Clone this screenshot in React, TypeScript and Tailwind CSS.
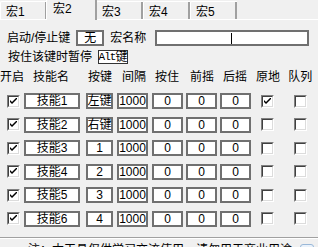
import React from "react";

const skills = [
  { name: "技能1", key: "左键", on: true, stay: true },
  { name: "技能2", key: "右键", on: true, stay: false },
  { name: "技能3", key: "1", on: true, stay: false },
  { name: "技能4", key: "2", on: true, stay: false },
  { name: "技能5", key: "3", on: true, stay: false },
  { name: "技能6", key: "4", on: true, stay: false },
];

function Check({ checked, className = "" }: { checked: boolean; className?: string }) {
  return (
    <div
      className={
        "w-[13px] h-[13px] shrink-0 bg-white border border-t-[#808080] border-l-[#808080] border-r-white border-b-white flex " +
        className
      }
    >
      <div className="flex-1 border border-t-[#404040] border-l-[#404040] border-r-[#dcdcdc] border-b-[#dcdcdc] flex items-center justify-center">
        {checked && (
          <svg width="7" height="7" viewBox="0 0 7 7">
            <path d="M0 2 L0 4 L2 6 L7 1 L7 -1 L2 4 Z" fill="#000" />
          </svg>
        )}
      </div>
    </div>
  );
}

function Box({ w, ml, children }: { w: string; ml: string; children: React.ReactNode }) {
  return (
    <div
      className={`${w} ${ml} h-[16px] shrink-0 bg-white border-2 border-[#707070] flex items-center justify-center text-[12px] leading-[12px] text-black whitespace-nowrap`}
    >
      {children}
    </div>
  );
}

function Tab({ label, active }: { label: string; active?: boolean }) {
  if (active) {
    return (
      <div className="relative z-10 -mb-px w-[51px] h-[21px] -ml-[1px] -mr-[1px] bg-[#f0f0f0] border-l border-t border-white rounded-tl-[2px] flex">
        <div className="flex-1 border-r-2 border-[#a0a0a0] pl-[6px] pt-[1px] text-[12px] leading-[16px]">{label}</div>
      </div>
    );
  }
  return (
    <div className="w-[47px] h-[18px] bg-[#f0f0f0] border-l border-t border-white rounded-tl-[2px] flex">
      <div className="flex-1 border-r-2 border-[#a0a0a0] pl-[5px] pt-[2px] text-[12px] leading-[16px]">{label}</div>
    </div>
  );
}

export default function App() {
  return (
    <div
      className="w-[318px] h-[247px] overflow-hidden bg-[#f0f0f0] text-black text-[12px]"
      style={{ fontFamily: '"Liberation Sans", "Noto Sans CJK SC", sans-serif' }}
    >
      <div className="flex items-end h-[20px] border-b border-white">
        <Tab label="宏1" />
        <Tab label="宏2" active />
        <Tab label="宏3" />
        <Tab label="宏4" />
        <Tab label="宏5" />
      </div>

      <div className="flex items-center mt-[9px] h-[17px]">
        <span className="ml-[7px] leading-[12px] whitespace-nowrap">启动/停止键</span>
        <div className="ml-[6px] w-[28px] h-[16px] bg-white border-2 border-[#707070] flex items-center justify-center leading-[12px]">
          无
        </div>
        <span className="ml-[6px] leading-[12px] whitespace-nowrap">宏名称</span>
        <div className="ml-[9px] w-[154px] h-[16px] mt-[1px] bg-white border-2 border-[#707070] flex items-center">
          <div className="ml-[74px] w-px h-[11px] bg-black" />
        </div>
      </div>

      <div className="flex items-center mt-[4px] h-[14px]">
        <span className="ml-[8px] leading-[12px] whitespace-nowrap">按住该键时暂停</span>
        <div className="ml-[6px] w-[30px] h-[14px] bg-white border border-[#333] flex items-center justify-center leading-[12px] whitespace-nowrap">
          <span style={{ fontFamily: '"Liberation Mono", monospace' }} className="text-[11px] tracking-[-1px]">Alt</span>键
        </div>
      </div>

      <div className="flex mt-[7px] h-[12px] leading-[12px] whitespace-nowrap">
        <span className="shrink-0">开启</span>
        <span className="shrink-0 ml-[9px]">技能名</span>
        <span className="shrink-0 ml-[19px]">按键</span>
        <span className="shrink-0 ml-[10px]">间隔</span>
        <span className="shrink-0 ml-[9px]">按住</span>
        <span className="shrink-0 ml-[11px]">前摇</span>
        <span className="shrink-0 ml-[9px]">后摇</span>
        <span className="shrink-0 ml-[9px]">原地</span>
        <span className="shrink-0 ml-[8px]">队列</span>
      </div>

      <div className="flex flex-col gap-[7.6px] mt-[10px]">
        {skills.map((s) => (
          <div key={s.name} className="flex items-center h-[16px]">
            <Check checked={s.on} className="ml-[7px]" />
            <Box w="w-[56px]" ml="ml-[4px]">{s.name}</Box>
            <Box w="w-[27px]" ml="ml-[6px]">{s.key}</Box>
            <Box w="w-[31px]" ml="ml-[4px]">1000</Box>
            <Box w="w-[31px]" ml="ml-[4px]">0</Box>
            <Box w="w-[31px]" ml="ml-[3px]">0</Box>
            <Box w="w-[31px]" ml="ml-[3px]">0</Box>
            <Check checked={s.stay} className="ml-[10px]" />
            <Check checked={false} className="ml-[20px]" />
          </div>
        ))}
      </div>

      <div className="mt-[10px] border-t border-[#a0a0a0] border-b border-b-white" />

      <div className="flex items-start mt-[5px] h-[10px]">
        <span className="ml-[28px] leading-[12px] whitespace-nowrap">注：本工具仅供学习交流使用，请勿用于商业用途</span>
        <div className="ml-[8px] w-[14px] h-[14px] rounded-[3px] border border-[#9ab8d8] bg-[#eaf2fb]" />
      </div>
    </div>
  );
}
